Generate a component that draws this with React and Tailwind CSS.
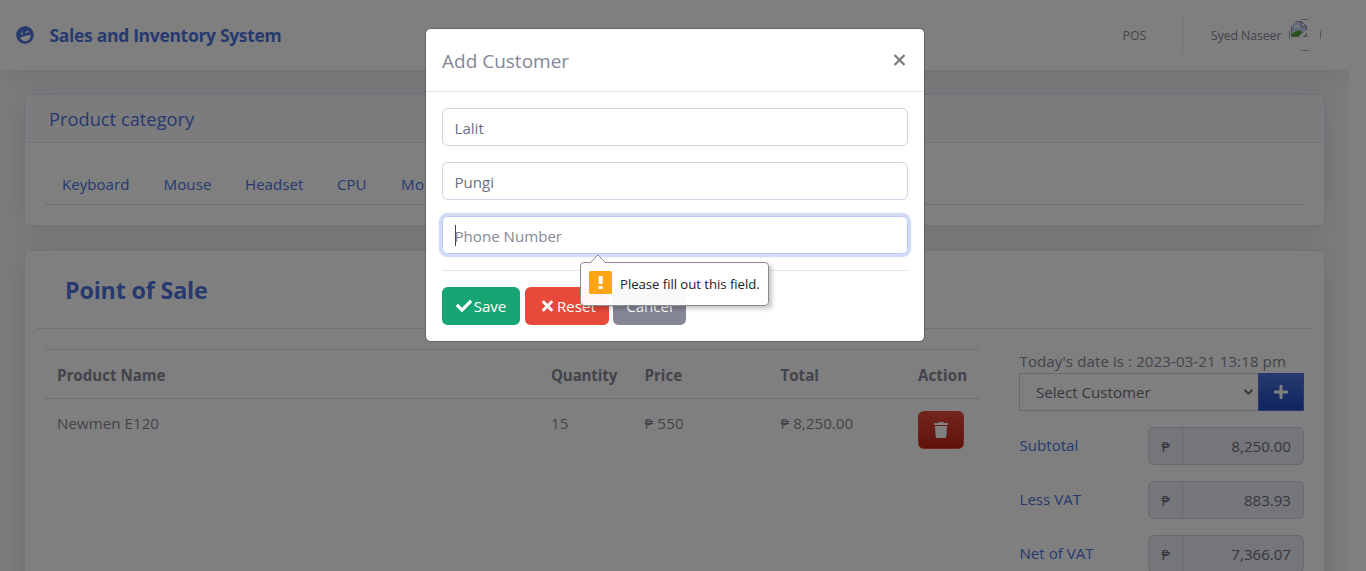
import React from "react";
import { FaLaughWink, FaCheck, FaTimes, FaTrash, FaPlus } from "react-icons/fa";

const categories = [
  { name: "Keyboard", width: "w-[101px] pl-[17px]" },
  { name: "Mouse", width: "w-[82px] pl-[17.5px] tracking-[0.1px]" },
  { name: "Headset", width: "w-[92px] pl-[17px]" },
  { name: "CPU", width: "w-[64px] pl-[17px]" },
  { name: "Mo", width: "w-[58px] pl-[17px] tracking-[0.4px]" },
];

const totals = [
  { label: "Subtotal", value: "8,250.00" },
  { label: "Less VAT", value: "883.93" },
  { label: "Net of VAT", value: "7,366.07" },
];

function BrokenAvatar() {
  return (
    <div className="h-8 w-8 overflow-hidden rounded-full">
      <div className="h-8 w-8 border border-[#a0a0a0] pl-px pt-px">
        <svg width="16" height="16" viewBox="0 0 16 16">
          <path d="M0.5 0.5H10.5L15.5 5.5V15.5H0.5Z" fill="#c3d5f5" stroke="#8c8c8c" />
          <path d="M10.5 0.5V5.5H15.5Z" fill="#fff" stroke="#8c8c8c" />
          <path d="M3 6.5a1.6 1.6 0 0 1 1.6-2 2 2 0 0 1 3.6 0.7q1 0 1 1.3z" fill="#fff" />
          <path d="M1 15V13.5Q7 7 11.5 11L8 15Z" fill="#4aa52e" />
          <path d="M7.5 16L16 8.5V11.5L11.5 16Z" fill="#fff" />
        </svg>
      </div>
    </div>
  );
}

function TopBar() {
  return (
    <nav className="relative flex h-[70px] shrink-0 items-center justify-between bg-white pl-4 pr-7 shadow-[0_2px_28px_rgba(58,59,69,0.15)]">
      <div className="flex items-center text-[#4e73df]">
        <FaLaughWink className="h-[18px] w-[18px] -rotate-15" />
        <span className="ml-[15.5px] pt-px text-[17.5px] font-bold tracking-[-0.32px]">Sales and Inventory System</span>
      </div>
      <div className="flex items-center text-[12.3px] text-[#858796]">
        <span className="w-[59.5px] pt-[2px]">POS</span>
        <div className="h-[38px] w-px bg-[#e3e6f0]" />
        <span className="ml-7 w-[78px] whitespace-nowrap pt-[2px] tracking-[-0.09px]">Syed Naseer</span>
        <BrokenAvatar />
      </div>
    </nav>
  );
}

function CategoryCard() {
  return (
    <section className="h-[132px] shrink-0 overflow-visible rounded-[5.6px] border border-[#e3e6f0] bg-white shadow-[0_2px_28px_rgba(58,59,69,0.15)]">
      <div className="flex h-12 items-center rounded-t-[5px] border-b border-[#e3e6f0] bg-[#f8f9fc] pl-6 pt-[2px] text-[18.2px] tracking-[0.05px] text-[#4e73df]">
        Product category
      </div>
      <div className="p-5">
        <div className="flex h-[42px] items-center border-b border-[#dddfeb] pt-[2px] text-[15.1px] text-[#4e73df]">
          {categories.map((c) => (
            <span key={c.name} className={"shrink-0 whitespace-nowrap " + c.width}>
              {c.name}
            </span>
          ))}
        </div>
      </div>
    </section>
  );
}

function SaleTable() {
  return (
    <div className="h-[300px] w-[934px] text-[15.1px] text-[#858796]">
      <div className="grid h-[50px] grid-cols-[494px_93.5px_136px_137.5px_73px] items-center border-y border-[#dddfeb] pl-3 pt-[2px] font-bold">
        <span>Product Name</span>
        <span className="tracking-[-0.15px]">Quantity</span>
        <span>Price</span>
        <span>Total</span>
        <span className="tracking-[0.1px]">Action</span>
      </div>
      <div className="grid grid-cols-[494px_93.5px_136px_137.5px_73px] items-start pl-3 pt-3 leading-6">
        <span className="tracking-[0.05px]">Newmen E120</span>
        <span>15</span>
        <span className="tracking-[0.15px]">₱ 550</span>
        <span className="tracking-[0.05px]">₱ 8,250.00</span>
        <div className="flex h-[38px] w-[46px] items-center justify-center rounded-[5.6px] border border-[#e74a3b] bg-linear-to-b from-[#e74a3b] to-[#be2617] text-white">
          <FaTrash className="h-4 w-[14px]" />
        </div>
      </div>
    </div>
  );
}

function Totals() {
  return (
    <div className="ml-10 w-[285px] text-[15.1px] text-[#858796]">
      <div className="h-6 whitespace-nowrap pl-[0.5px] leading-6 tracking-[0.08px]">Today's date is : 2023-03-21 13:18 pm</div>
      <div className="flex h-[38px]">
        <div className="flex flex-1 items-center justify-between border border-r-0 border-[#d1d3e2] pl-4 pr-[5px] text-[#6e707e]">
          <span>Select Customer</span>
          <svg width="9" height="6" viewBox="0 0 9 6" fill="none" stroke="#6e707e" strokeWidth="2">
            <path d="M0.5 0.8L4.5 4.6L8.5 0.8" />
          </svg>
        </div>
        <div className="flex w-[46px] items-center justify-center border border-[#4e73df] bg-linear-to-b from-[#4e73df] to-[#224abe] text-white">
          <FaPlus className="h-4 w-4" />
        </div>
      </div>
      {totals.map((t) => (
        <div key={t.label} className="mt-4 flex h-[38px] justify-between">
          <span className="pl-[0.5px] leading-[37px] text-[#4e73df]">{t.label}</span>
          <div className="flex w-[156px] items-center overflow-hidden rounded-[5.6px] border border-[#d1d3e2] bg-[#eaecf4] text-[#6e707e]">
            <span className="flex h-full w-[34px] items-center justify-center border-r border-[#d1d3e2]">₱</span>
            <span className="flex-1 pr-3 text-right">{t.value}</span>
          </div>
        </div>
      ))}
    </div>
  );
}

function SaleCard() {
  return (
    <section className="mt-6 h-[420px] shrink-0 rounded-[5.6px] border border-[#e3e6f0] bg-white px-3 shadow-[0_2px_28px_rgba(58,59,69,0.15)]">
      <div className="flex h-[78px] items-center border-b border-[#dfe1e8] pl-7 pt-[2px] text-[23.3px] font-bold tracking-[-0.18px] text-[#4e73df]">
        <span>Point of Sale</span>
      </div>
      <div className="flex pl-2 pt-5">
        <SaleTable />
        <Totals />
      </div>
    </section>
  );
}

function ValidationBubble() {
  return (
    <div className="absolute left-[154px] top-[233px] flex h-[44px] w-[189px] items-center rounded-[4px] border border-[#8a8a8a] bg-white/95 pl-2 shadow-[3px_3px_4px_rgba(0,0,0,0.22)]">
      <svg className="absolute -top-[9px] left-[8px]" width="18" height="10" viewBox="0 0 18 10">
        <path d="M0.5 10L9 1L17.5 10Z" fill="#fff" />
        <path d="M1 9.2L9 1L17 9.2" fill="none" stroke="#8a8a8a" />
      </svg>
      <svg className="-mt-[3px]" width="23" height="23" viewBox="0 0 23 23">
        <rect width="23" height="23" rx="1.5" fill="#ffa514" />
        <rect x="9.7" y="5" width="4" height="8" fill="#fff" />
        <rect x="9.7" y="15" width="4" height="3" fill="#fff" />
      </svg>
      <span className="ml-2 whitespace-nowrap pt-[2px] text-[13.2px] tracking-[-0.05px] text-[#222]">Please fill out this field.</span>
    </div>
  );
}

function CustomerModal() {
  return (
    <div className="absolute left-[425px] top-[28px] h-[314px] w-[500px] rounded-[5.6px] border border-black/20 bg-white bg-clip-padding text-[15.1px] text-[#6e707e]">
      <div className="flex h-[63px] items-center justify-between border-b border-[#e3e6f0] pl-4 pr-[18px]">
        <h5 className="pt-[2px] text-[19px] text-[#858796]">Add Customer</h5>
        <svg width="13" height="12" viewBox="0 0 13 12" fill="none" stroke="#7f7f7f" strokeWidth="2.4">
          <path d="M1.5 1L11.5 11M11.5 1L1.5 11" />
        </svg>
      </div>
      <div className="p-4">
        <div className="flex h-[38px] items-center rounded-[5.6px] border border-[#d1d3e2] pl-[11.5px] pt-[2px]">Lalit</div>
        <div className="mt-4 flex h-[38px] items-center rounded-[5.6px] border border-[#d1d3e2] pl-[11.5px] pt-[2px]">Pungi</div>
        <div className="mt-4 flex h-[38px] items-center rounded-[5.6px] border border-[#bac8f3] pl-3 pt-[2px] text-[#858796] shadow-[0_0_0_3.2px_rgba(78,115,223,0.25)]">
          <span className="-mt-[2px] h-[21px] w-px bg-[#444]" />
          <span className="-ml-[1.5px]">Phone Number</span>
        </div>
        <div className="my-4 h-px bg-[#e5e5e5]" />
        <div className="flex h-[38px] text-white">
          <div className="flex w-[78px] items-center justify-center rounded-[5.6px] bg-[#17a673]">
            <FaCheck className="mr-[2px] h-4 w-4" />
            <span>Save</span>
          </div>
          <div className="ml-[5px] flex w-[84px] items-center rounded-[5.6px] bg-[#e74a3b] pl-4">
            <FaTimes className="mr-[3px] h-4 w-[13px]" />
            <span>Reset</span>
          </div>
          <div className="ml-1 flex w-[73px] items-center justify-center rounded-[5.6px] bg-[#858796]">
            <span>Cancel</span>
          </div>
        </div>
      </div>
      <ValidationBubble />
    </div>
  );
}

export default function App() {
  return (
    <div className="relative h-[571px] w-[1366px] overflow-hidden bg-white font-['Open_Sans','Noto_Sans',sans-serif]">
      <div className="flex h-[571px] w-[1349px] flex-col overflow-hidden bg-[#f8f9fc]">
        <TopBar />
        <main className="flex flex-col px-6 pt-6">
          <CategoryCard />
          <SaleCard />
        </main>
      </div>
      <div className="absolute inset-0 bg-black/50" />
      <CustomerModal />
    </div>
  );
}
